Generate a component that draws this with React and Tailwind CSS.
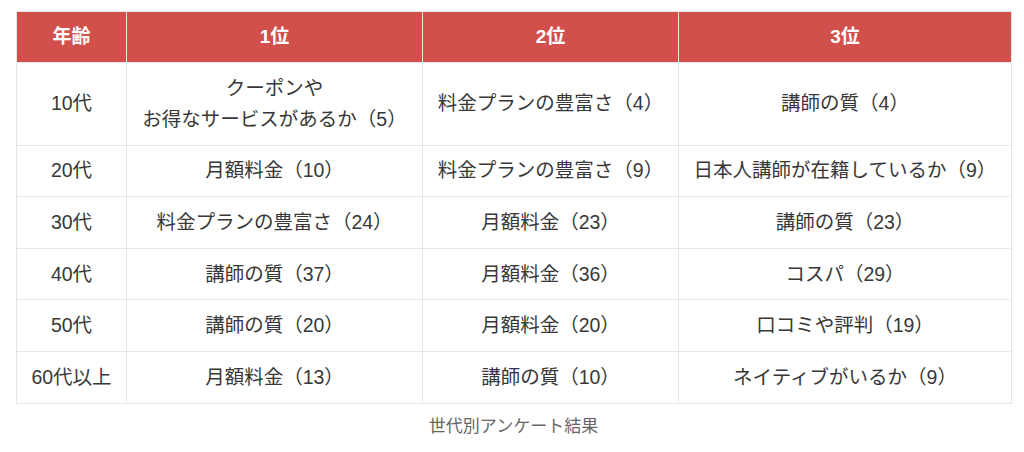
import React from "react";

const rows = [
  ["10代", ["クーポンや", "お得なサービスがあるか（5）"], "料金プランの豊富さ（4）", "講師の質（4）"],
  ["20代", "月額料金（10）", "料金プランの豊富さ（9）", "日本人講師が在籍しているか（9）"],
  ["30代", "料金プランの豊富さ（24）", "月額料金（23）", "講師の質（23）"],
  ["40代", "講師の質（37）", "月額料金（36）", "コスパ（29）"],
  ["50代", "講師の質（20）", "月額料金（20）", "口コミや評判（19）"],
  ["60代以上", "月額料金（13）", "講師の質（10）", "ネイティブがいるか（9）"],
];

export default function App() {
  return (
    <div
      className="w-[1024px] h-[452px] bg-white pt-[11px] pl-[16px]"
      style={{ fontFamily: '"Liberation Sans", "Noto Sans CJK JP", sans-serif' }}
    >
      <table className="w-[995px] border-collapse table-fixed text-[19.5px] leading-[31px] text-[#383838]">
        <colgroup>
          <col className="w-[110px]" />
          <col className="w-[296px]" />
          <col className="w-[256px]" />
          <col className="w-[333px]" />
        </colgroup>
        <thead>
          <tr className="bg-[#d1504b] text-white font-bold">
            {["年齢", "1位", "2位", "3位"].map((h) => (
              <th key={h} className="border border-[#e6e6e6] py-[10px] px-0 text-center font-bold text-[19px] leading-[30px]">
                {h}
              </th>
            ))}
          </tr>
        </thead>
        <tbody>
          {rows.map((r) => (
            <tr key={r[0]}>
              {r.map((c, i) => (
                <td key={i} className="border border-[#e6e6e6] py-[9.8px] px-0 text-center whitespace-nowrap">
                  {Array.isArray(c) ? (
                    <>
                      {c[0]}
                      <br />
                      {c[1]}
                    </>
                  ) : (
                    c
                  )}
                </td>
              ))}
            </tr>
          ))}
        </tbody>
      </table>
      <div className="w-[995px] text-center text-[17px] leading-[20px] text-[#666666] mt-[13px]">
        世代別アンケート結果
      </div>
    </div>
  );
}
